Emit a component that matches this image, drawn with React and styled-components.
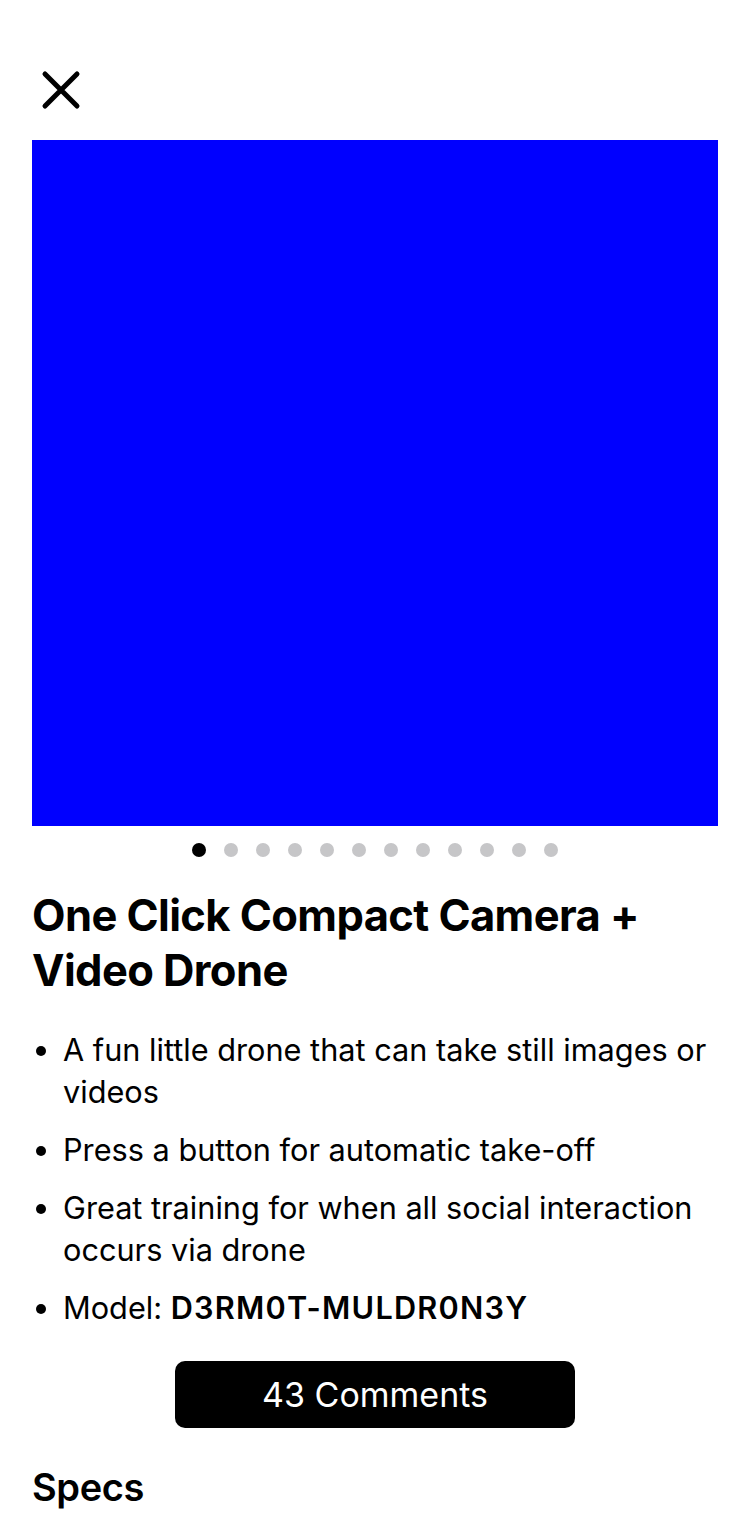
import React from "react";
import styled, { createGlobalStyle } from "styled-components";

const GlobalStyle = createGlobalStyle`
  body {
    margin: 0;
    background: #fff;
    font-family: Inter, "Noto Sans", sans-serif;
    color: #000;
  }
`;

const Page = styled.div`
  padding: 60px 32px 0;
`;

const Header = styled.div`
  height: 80px;
  display: flex;
  align-items: flex-start;
`;

const CloseButton = styled.button`
  border: none;
  background: none;
  padding: 0;
  margin: 10px 0 0 9px;
  width: 40px;
  height: 40px;
  cursor: pointer;
`;

const Photo = styled.div`
  width: 100%;
  aspect-ratio: 1 / 1;
  background: #0000ff;
`;

const Dots = styled.div`
  display: flex;
  justify-content: center;
  gap: 18px;
  margin-top: 17px;
`;

const Dot = styled.span`
  width: 14px;
  height: 14px;
  border-radius: 50%;
  background: ${(p) => (p.active ? "#000" : "#c6c6c8")};
`;

const Title = styled.h1`
  margin: 31px 0 0;
  font-size: 43.5px;
  line-height: 55px;
  font-weight: 700;
  letter-spacing: -0.6px;
`;

const Bullets = styled.ul`
  margin: 31px 0 0;
  padding-left: 31px;
  font-size: 30.7px;
  line-height: 42px;
`;

const Bullet = styled.li`
  margin-bottom: 16px;
`;

const Strong = styled.span`
  font-weight: 600;
  letter-spacing: 1.2px;
`;

const ButtonRow = styled.div`
  display: flex;
  justify-content: center;
  margin-top: 32px;
`;

const CommentsButton = styled.button`
  width: 400px;
  height: 67px;
  border: none;
  border-radius: 10px;
  background: #000;
  color: #fff;
  font-family: Inter, "Noto Sans", sans-serif;
  font-size: 34px;
  font-weight: 400;
`;

const SectionTitle = styled.h2`
  margin: 37px 0 0;
  font-size: 38px;
  line-height: 44px;
  font-weight: 600;
  letter-spacing: -0.4px;
`;

const SpecText = styled.p`
  margin: 21px 0 0;
  font-size: 30px;
  line-height: 42px;
  color: #6b6b6b;
`;

function CloseIcon() {
  return (
    <svg width="40" height="40" viewBox="0 0 40 40">
      <path
        d="M4 4 L36 36 M36 4 L4 36"
        stroke="#000"
        strokeWidth="5"
        strokeLinecap="round"
        fill="none"
      />
    </svg>
  );
}

export default function App() {
  const dots = Array.from({ length: 12 }, (_, i) => i);
  return (
    <Page>
      <GlobalStyle />
      <Header>
        <CloseButton aria-label="Close">
          <CloseIcon />
        </CloseButton>
      </Header>
      <Photo />
      <Dots>
        {dots.map((i) => (
          <Dot key={i} active={i === 0} />
        ))}
      </Dots>
      <Title>One Click Compact Camera + Video Drone</Title>
      <Bullets>
        <Bullet>A fun little drone that can take still images or videos</Bullet>
        <Bullet>Press a button for automatic take-off</Bullet>
        <Bullet>Great training for when all social interaction occurs via drone</Bullet>
        <Bullet>
          Model: <Strong>D3RM0T-MULDR0N3Y</Strong>
        </Bullet>
      </Bullets>
      <ButtonRow>
        <CommentsButton>43 Comments</CommentsButton>
      </ButtonRow>
      <SectionTitle>Specs</SectionTitle>
      <SpecText>
        Weight: 4.1 oz, folds flat to fit in a jacket pocket, with a flight time of about 8 minutes
      </SpecText>
    </Page>
  );
}
